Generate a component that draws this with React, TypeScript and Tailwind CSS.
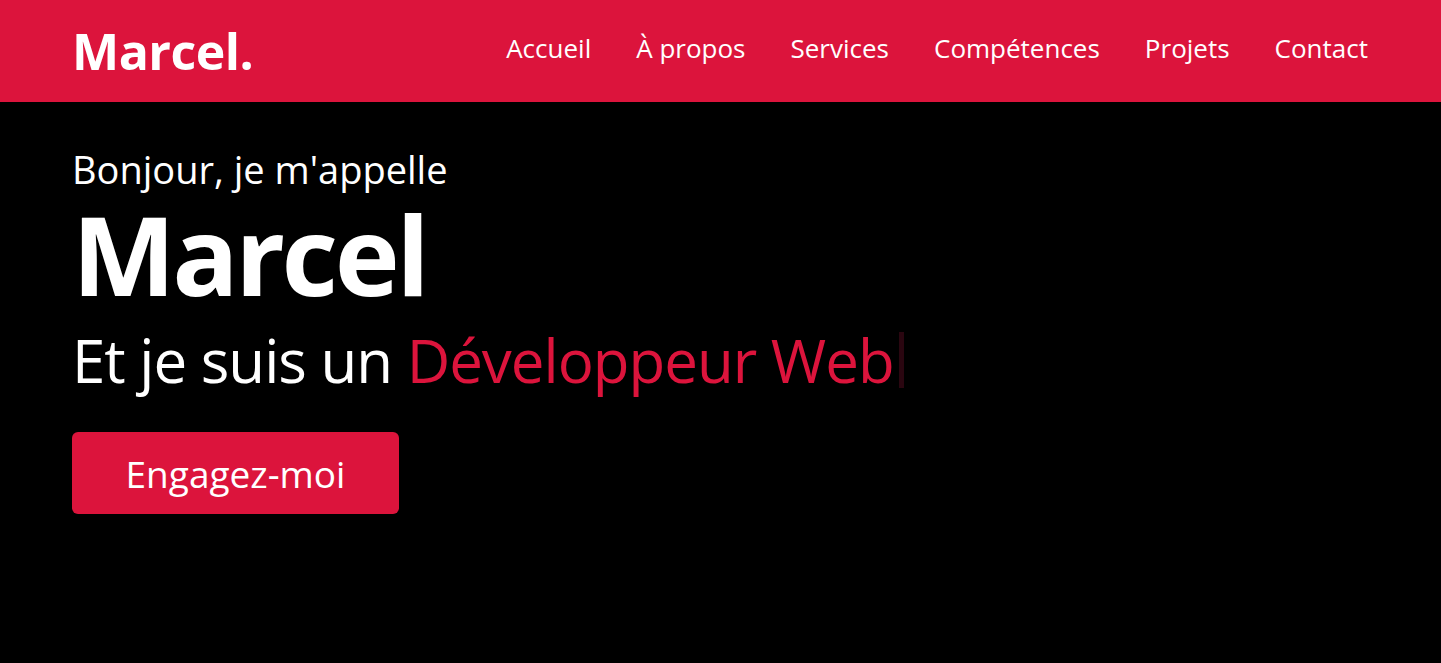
import React from "react";

export default function App() {
  const links = ["Accueil", "À propos", "Services", "Compétences", "Projets", "Contact"];
  return (
    <div className="min-h-[663px] bg-black text-white" style={{ fontFamily: '"Open Sans", "Noto Sans", sans-serif' }}>
      <header className="h-[102px] bg-[#DC143C] flex items-center justify-between pl-[72px] pr-[73px]">
        <div className="text-[50px] font-bold leading-none tracking-[-0.5px]">Marcel.</div>
        <nav className="flex items-center gap-[45px]">
          {links.map((l) => (
            <a key={l} className="text-[26px] font-medium leading-none mt-[-6px]">{l}</a>
          ))}
        </nav>
      </header>
      <main className="pl-[72px] flex flex-col items-start">
        <div className="mt-[48px] text-[38px] leading-[38px]">Bonjour, je m'appelle</div>
        <div className="mt-[10px] text-[110px] leading-[110px] font-bold tracking-[-3.5px]">Marcel</div>
        <div className="mt-[22px] text-[60px] leading-[60px] tracking-[-1px] flex items-center">
          <span>Et je suis un&nbsp;</span>
          <span className="text-[#DC143C]">Développeur Web</span>
          <span className="inline-block w-[5px] h-[56px] bg-[#2a0610] ml-[5px]" />
        </div>
        <button className="mt-[42px] w-[327px] h-[82px] rounded-[6px] bg-[#DC143C] text-[37px] leading-none text-white">
          Engagez-moi
        </button>
      </main>
    </div>
  );
}
